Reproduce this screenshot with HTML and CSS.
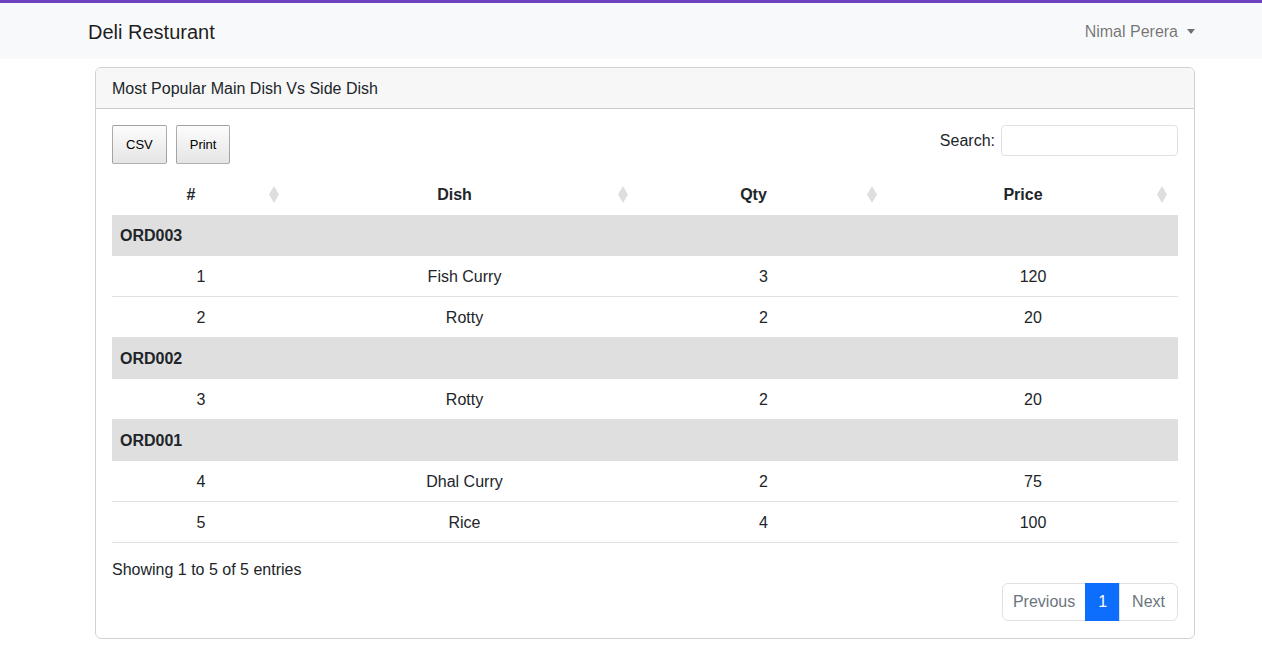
FILE: index.html
```html
<!DOCTYPE html>
<html lang="en">
<head>
<meta charset="utf-8">
<title>Deli Resturant</title>
<link rel="stylesheet" href="styles.css">
</head>
<body>
<nav class="navbar">
  <div class="nav-inner">
    <a class="brand" href="#">Deli Resturant</a>
    <a class="user" href="#">Nimal Perera<span class="caret"></span></a>
  </div>
</nav>
<main class="container">
  <section class="card">
    <div class="card-header">Most Popular Main Dish Vs Side Dish</div>
    <div class="card-body">
      <div class="toolbar">
        <div class="buttons">
          <button class="dt-btn" type="button">CSV</button>
          <button class="dt-btn" type="button">Print</button>
        </div>
        <label class="search">Search:<input type="search" class="search-input"></label>
      </div>
      <table class="data-table">
        <colgroup>
          <col class="c1"><col class="c2"><col class="c3"><col class="c4">
        </colgroup>
        <thead>
          <tr><th>#</th><th>Dish</th><th>Qty</th><th>Price</th></tr>
        </thead>
        <tbody>
          <tr class="group"><td colspan="4">ORD003</td></tr>
          <tr><td>1</td><td>Fish Curry</td><td>3</td><td>120</td></tr>
          <tr><td>2</td><td>Rotty</td><td>2</td><td>20</td></tr>
          <tr class="group"><td colspan="4">ORD002</td></tr>
          <tr><td>3</td><td>Rotty</td><td>2</td><td>20</td></tr>
          <tr class="group"><td colspan="4">ORD001</td></tr>
          <tr><td>4</td><td>Dhal Curry</td><td>2</td><td>75</td></tr>
          <tr><td>5</td><td>Rice</td><td>4</td><td>100</td></tr>
        </tbody>
      </table>
      <div class="info">Showing 1 to 5 of 5 entries</div>
      <div class="pager-row">
        <ul class="pagination">
          <li class="page"><a href="#">Previous</a></li>
          <li class="page active"><a href="#">1</a></li>
          <li class="page"><a href="#">Next</a></li>
        </ul>
      </div>
    </div>
  </section>
</main>
</body>
</html>
```
FILE: styles.css
```css
* { box-sizing: border-box; }
html, body { margin: 0; padding: 0; }
body {
  font-family: "Liberation Sans", Arial, sans-serif;
  font-size: 16px;
  line-height: 24px;
  color: #212529;
  background: #fff;
}
a { text-decoration: none; }

.navbar {
  background: #f8f9fa;
  border-top: 3px solid #6f42c1;
  height: 59px;
}
.nav-inner {
  margin-left: 88px;
  width: 1107px;
  height: 56px;
  display: flex;
  align-items: center;
  justify-content: space-between;
}
.brand {
  font-size: 20px;
  line-height: 30px;
  color: rgba(0,0,0,.9);
  margin-top: 2px;
}
.user {
  color: rgba(0,0,0,.55);
  display: flex;
  align-items: center;
  margin-top: 1px;
}
.caret {
  display: inline-block;
  margin-left: 9px;
  width: 0; height: 0;
  border-top: 5px solid rgba(0,0,0,.55);
  border-left: 4px solid transparent;
  border-right: 4px solid transparent;
}

.container {
  margin-left: 95px;
  width: 1100px;
  padding-top: 8px;
}
.card {
  border: 1px solid rgba(0,0,0,.175);
  border-radius: 6px;
  overflow: hidden;
}
.card-header {
  background: #f7f7f7;
  border-bottom: 1px solid rgba(0,0,0,.175);
  padding: 9px 16px 7px;
  line-height: 24px;
  color: #212529;
}
.card-body {
  padding: 16px 16px 17px;
}

.toolbar {
  display: flex;
  justify-content: space-between;
  align-items: flex-start;
}
.buttons { display: flex; gap: 9px; }
.dt-btn {
  font-family: inherit;
  font-size: 13px;
  line-height: 19px;
  padding: 9px 13px;
  color: #000;
  border: 1px solid rgba(0,0,0,.3);
  border-radius: 2px;
  background: linear-gradient(to bottom, rgba(230,230,230,.1) 0%, rgba(0,0,0,.1) 100%);
  cursor: pointer;
}
.search {
  display: flex;
  align-items: center;
  gap: 6px;
  color: #212529;
}
.search-input {
  width: 177px;
  height: 31px;
  border: 1px solid #dee2e6;
  border-radius: 4px;
  font-family: inherit;
  font-size: 14px;
  padding: 4px 8px;
}

.data-table {
  width: 100%;
  table-layout: fixed;
  border-collapse: collapse;
  margin-top: 10px;
}
.c1 { width: 178px; }
.c2 { width: 349px; }
.c3 { width: 249px; }
.c4 { width: 290px; }
.data-table th {
  position: relative;
  font-weight: 700;
  text-align: center;
  padding: 9px 30px 7px 10px;
  border-bottom: 1px solid #fff;
}
.data-table th::after {
  content: "";
  position: absolute;
  right: 11px;
  top: 12px;
  width: 10px;
  height: 17px;
  background: #dedede;
  clip-path: polygon(50% 0, 100% 50%, 50% 100%, 0 50%);
}
.data-table td {
  text-align: center;
  padding: 9px 8px 7px;
  border-bottom: 1px solid #dee2e6;
}
.data-table tr.group td {
  text-align: left;
  font-weight: 700;
  background: #dfdfdf;
  border-bottom-color: #dfdfdf;
}

.info {
  padding-top: 15px;
  line-height: 24px;
}
.pager-row {
  display: flex;
  justify-content: flex-end;
  margin-top: 1px;
}
.pagination {
  display: flex;
  list-style: none;
  margin: 0;
  padding: 0;
}
.page a {
  display: block;
  padding: 6px 12px;
  line-height: 24px;
  color: #6c757d;
  border: 1px solid #dee2e6;
  margin-left: -1px;
  background: #fff;
}
.page:first-child a { border-radius: 6px 0 0 6px; margin-left: 0; padding: 6px 10px; }
.page:last-child a { border-radius: 0 6px 6px 0; }
.page.active a {
  background: #0d6efd;
  border-color: #0d6efd;
  color: #fff;
}
```
